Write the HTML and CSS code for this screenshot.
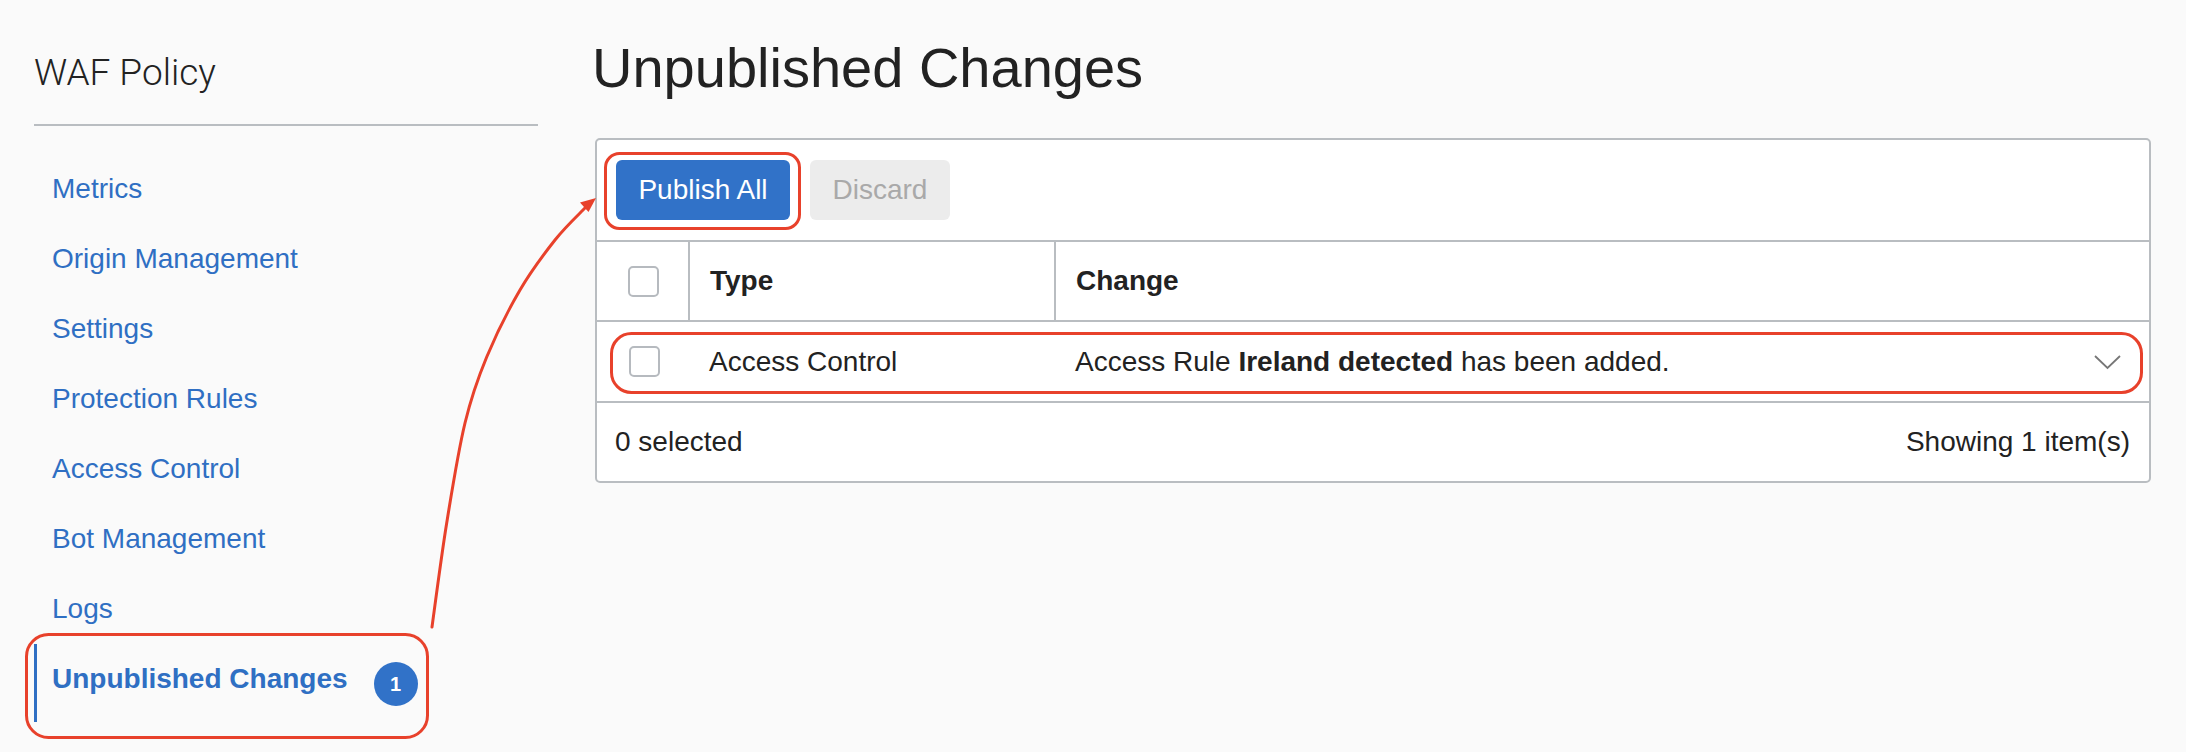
FILE: index.html
```html
<!DOCTYPE html>
<html lang="en">
<head>
<meta charset="utf-8">
<title>Unpublished Changes</title>
<link rel="stylesheet" href="styles.css">
</head>
<body>
<div class="page">
  <aside class="sidebar">
    <div class="side-title">WAF Policy</div>
    <nav class="nav">
      <a class="nav-item">Metrics</a>
      <a class="nav-item">Origin Management</a>
      <a class="nav-item">Settings</a>
      <a class="nav-item">Protection Rules</a>
      <a class="nav-item">Access Control</a>
      <a class="nav-item">Bot Management</a>
      <a class="nav-item">Logs</a>
      <a class="nav-item active"><span class="nav-label">Unpublished Changes</span><span class="badge">1</span></a>
    </nav>
  </aside>
  <main class="main">
    <h1 class="title">Unpublished Changes</h1>
    <section class="panel">
      <div class="toolbar">
        <button class="btn btn-primary">Publish All</button>
        <button class="btn btn-disabled">Discard</button>
      </div>
      <div class="row head">
        <div class="cell cell-check"><span class="checkbox"></span></div>
        <div class="cell cell-type">Type</div>
        <div class="cell cell-change">Change</div>
      </div>
      <div class="row data">
        <div class="cell cell-check"><span class="checkbox"></span></div>
        <div class="cell cell-type">Access Control</div>
        <div class="cell cell-change">
          <span>Access Rule <b>Ireland detected</b> has been added.</span>
          <svg class="chevron" width="28" height="16" viewBox="0 0 28 16"><path d="M1 2 L13.5 14 L26 2" fill="none" stroke="#777" stroke-width="1.8"/></svg>
        </div>
      </div>
      <div class="footer">
        <span>0 selected</span>
        <span>Showing 1 item(s)</span>
      </div>
    </section>
  </main>
  <svg class="annotations" width="2186" height="752" viewBox="0 0 2186 752">
    <rect x="26.5" y="634.5" width="401" height="103" rx="22" fill="none" stroke="#e8412b" stroke-width="3"/>
    <rect x="605.5" y="153.5" width="194" height="75" rx="14" fill="none" stroke="#e8412b" stroke-width="3"/>
    <rect x="611.5" y="333.5" width="1530" height="59" rx="20" fill="none" stroke="#e8412b" stroke-width="3"/>
    <path d="M432 627 C434.4 609.7 441.2 557 446.7 523 C452.2 489 458.3 450.7 465 423 C471.7 395.3 477.5 379.2 486.7 357 C495.9 334.8 508.6 309.5 520 290 C531.4 270.5 544.2 253.7 555 240 C565.8 226.3 580 213.3 585 208" fill="none" stroke="#e8412b" stroke-width="3" stroke-linecap="round"/>
    <polygon points="596,198 580,202.5 588.5,212" fill="#e8412b"/>
  </svg>
</div>
</body>
</html>
```
FILE: styles.css
```css
* { box-sizing: border-box; }

html, body {
  margin: 0;
  padding: 0;
}

body {
  background: #fafafa;
  font-family: "Liberation Sans", Arial, sans-serif;
  color: #222;
}

.page {
  position: relative;
  display: flex;
  width: 2186px;
  min-height: 752px;
  padding-left: 34px;
}

.sidebar {
  width: 504px;
  flex: none;
}

.side-title {
  font-family: Roboto, "Liberation Sans", sans-serif;
  font-weight: 300;
  font-size: 37px;
  line-height: 44px;
  color: #222;
  padding-top: 51px;
  padding-bottom: 29px;
  border-bottom: 2px solid #b9bdc1;
}

.nav {
  display: flex;
  flex-direction: column;
  padding-top: 28px;
}

.nav-item {
  display: flex;
  align-items: center;
  height: 70px;
  padding-left: 18px;
  font-size: 28px;
  line-height: 70px;
  color: #2f6fc3;
  white-space: nowrap;
}

.nav-item.active {
  height: 78px;
  align-items: flex-start;
  border-left: 3px solid #2f6fc3;
  padding-left: 15px;
  font-weight: bold;
}

.badge {
  width: 44px;
  height: 44px;
  margin-top: 18px;
  margin-left: 26px;
  border-radius: 50%;
  background: #3172c8;
  color: #fff;
  font-size: 20px;
  font-weight: bold;
  line-height: 44px;
  text-align: center;
}

.main {
  flex: none;
  width: 1556px;
  margin-left: 57px;
  padding-top: 36px;
}

.title {
  margin: 0 0 38px -3px;
  font-size: 56px;
  line-height: 64px;
  font-weight: normal;
  color: #222;
}

.panel {
  background: #fff;
  border: 2px solid #b9bdc1;
  border-radius: 5px;
}

.toolbar {
  display: flex;
  gap: 20px;
  height: 102px;
  padding: 20px 19px 0;
  border-bottom: 2px solid #b9bdc1;
}

.btn {
  height: 60px;
  padding: 0 22px;
  border: none;
  border-radius: 6px;
  font-family: "Liberation Sans", Arial, sans-serif;
  font-size: 28px;
}

.btn-primary {
  width: 174px;
  background: #3172c8;
  color: #fff;
}

.btn-disabled {
  width: 140px;
  background: #ececec;
  color: #a9a9a9;
}

.row {
  display: grid;
  grid-template-columns: 93px 366px 1fr;
  border-bottom: 2px solid #b9bdc1;
}

.row.head { height: 80px; }
.row.data { height: 81px; }

.cell {
  display: flex;
  align-items: center;
  font-size: 28px;
}

.cell-check { justify-content: center; padding-left: 2px; }

.head .cell { font-weight: bold; }
.head .cell-check,
.head .cell-type { border-right: 2px solid #b9bdc1; }
.head .cell-type { padding-left: 20px; }
.head .cell-change { padding-left: 20px; }

.data .cell-type { padding-left: 19px; }
.data .cell-change {
  padding-left: 19px;
  padding-right: 27px;
  justify-content: space-between;
}

.checkbox {
  width: 31px;
  height: 31px;
  border: 2px solid #b6babf;
  border-radius: 5px;
  background: #fff;
}

.chevron { display: block; }

.footer {
  display: flex;
  justify-content: space-between;
  align-items: center;
  height: 78px;
  padding: 0 19px 0 18px;
  font-size: 28px;
}

.annotations {
  position: absolute;
  top: 0;
  left: 0;
  pointer-events: none;
}
```
